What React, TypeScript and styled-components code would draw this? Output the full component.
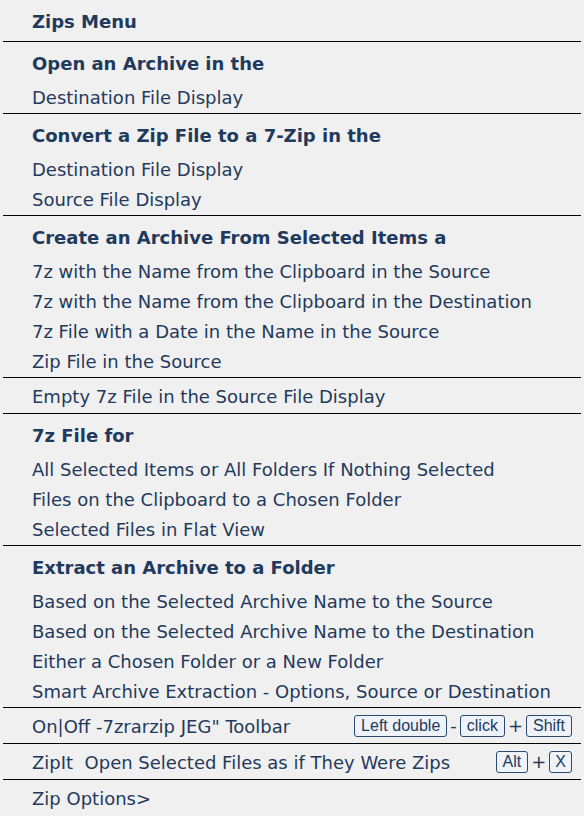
import React from "react";
import styled, { createGlobalStyle } from "styled-components";

const Global = createGlobalStyle`
  html, body { margin: 0; padding: 0; background: #f0f0f0; }
  body { font-family: "DejaVu Sans", Verdana, sans-serif; color: #1d3557; }
`;

const Menu = styled.div`
  width: 584px;
  height: 816px;
  overflow: hidden;
  background: #f0f0f0;
  display: flex;
  flex-direction: column;
`;

const Header = styled.div`
  height: 41px;
  box-sizing: border-box;
  padding-top: 1px;
  display: flex;
  align-items: center;
  padding-left: 32px;
  font-weight: bold;
  font-size: 18px;
  color: #1f3a5c;
`;

const Section = styled.div`
  margin: 0 3px;
  border-top: 1px solid #000;
  padding: 2px 0 1px;
  display: flex;
  flex-direction: column;
`;

const Row = styled.div<{ $heading?: boolean; $single?: boolean }>`
  height: ${(p) => (p.$heading ? 38 : p.$single ? 32 : 30)}px;
  display: flex;
  align-items: center;
  padding-left: 29px;
  padding-right: 9px;
  font-size: 18px;
  font-weight: ${(p) => (p.$heading ? "bold" : "normal")};
  color: #1f3a5c;
  white-space: nowrap;
`;

const Label = styled.span`
  flex: 1;
`;

const Keys = styled.span`
  display: flex;
  align-items: center;
  gap: 3px;
  font-family: "Liberation Sans", Arial, sans-serif;
  font-size: 16px;
`;

const Kbd = styled.span<{ $tight?: boolean }>`
  display: inline-flex;
  align-items: center;
  box-sizing: border-box;
  height: 22px;
  padding: 0 ${(p) => (p.$tight ? 5 : 6)}px;
  border: 1px solid #2b4a6f;
  border-radius: 3px;
  background: #eef3fa;
  color: #1f3a5c;
`;

const Op = styled.span`
  font-family: "DejaVu Sans", sans-serif;
  font-size: 18px;
  line-height: 1;
  color: #1f3a5c;
`;

type Item = string;
const sections: { heading?: string; items: Item[] }[] = [
  { heading: "Open an Archive in the", items: ["Destination File Display"] },
  {
    heading: "Convert a Zip File to a 7-Zip in the",
    items: ["Destination File Display", "Source File Display"],
  },
  {
    heading: "Create an Archive From Selected Items a",
    items: [
      "7z with the Name from the Clipboard in the Source",
      "7z with the Name from the Clipboard in the Destination",
      "7z File with a Date in the Name in the Source",
      "Zip File in the Source",
    ],
  },
  { items: ["Empty 7z File in the Source File Display"] },
  {
    heading: "7z File for",
    items: [
      "All Selected Items or All Folders If Nothing Selected",
      "Files on the Clipboard to a Chosen Folder",
      "Selected Files in Flat View",
    ],
  },
  {
    heading: "Extract an Archive to a Folder",
    items: [
      "Based on the Selected Archive Name to the Source",
      "Based on the Selected Archive Name to the Destination",
      "Either a Chosen Folder or a New Folder",
      "Smart Archive Extraction - Options, Source or Destination",
    ],
  },
];

export default function App() {
  return (
    <>
      <Global />
      <Menu>
        <Header>Zips Menu</Header>
        {sections.map((s, i) => (
          <Section key={i}>
            {s.heading && <Row $heading>{s.heading}</Row>}
            {s.items.map((it) => (
              <Row key={it} $single={!s.heading}>
                {it}
              </Row>
            ))}
          </Section>
        ))}
        <Section>
          <Row $single>
            <Label>On|Off -7zrarzip JEG" Toolbar</Label>
            <Keys>
              <Kbd>Left double</Kbd>
              <Op>-</Op>
              <Kbd>click</Kbd>
              <Op>+</Op>
              <Kbd>Shift</Kbd>
            </Keys>
          </Row>
        </Section>
        <Section>
          <Row $single>
            <Label>ZipIt&nbsp; Open Selected Files as if They Were Zips</Label>
            <Keys>
              <Kbd>Alt</Kbd>
              <Op>+</Op>
              <Kbd $tight>X</Kbd>
            </Keys>
          </Row>
        </Section>
        <Section>
          <Row $single>Zip Options&gt;</Row>
        </Section>
      </Menu>
    </>
  );
}
